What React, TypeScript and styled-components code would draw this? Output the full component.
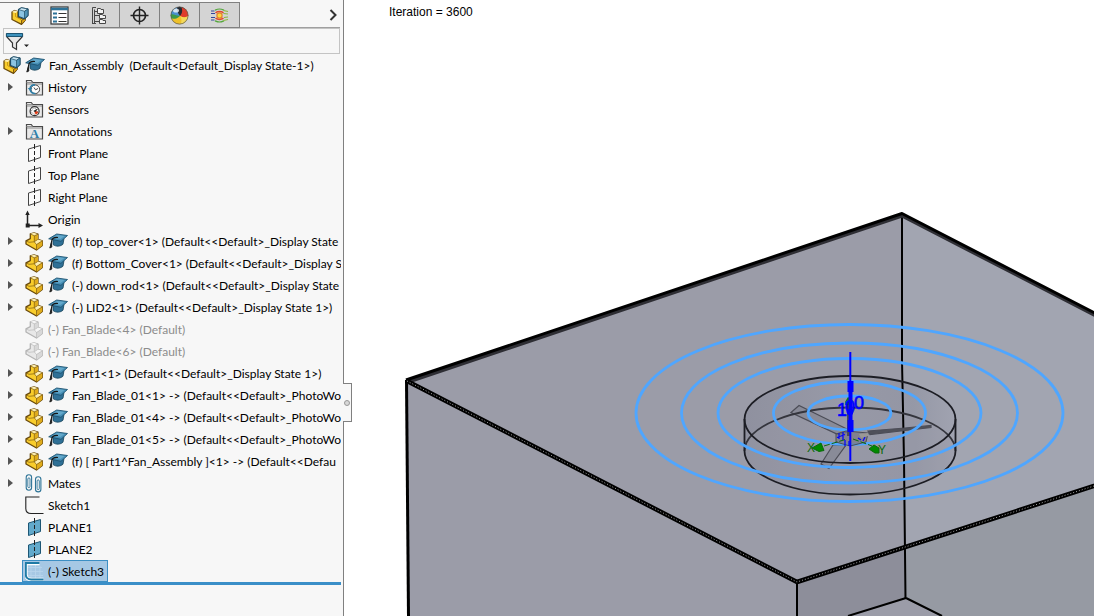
import React from 'react';
import styled, { createGlobalStyle } from 'styled-components';

const GlobalStyle = createGlobalStyle`
  *, *::before, *::after { box-sizing: border-box; }
  body { margin: 0; background: #fff; overflow: hidden; }
  button { font: inherit; color: inherit; background: none; border: 0; padding: 0; text-align: left; }
  svg { display: block; flex: none; }
`;

const Page = styled.div`
  display: flex;
  height: 100vh;
  font-family: Lato, 'Open Sans', sans-serif;
  font-size: 12px;
  font-variant-ligatures: none;
  color: #000;
`;

const Panel = styled.aside`
  position: relative;
  flex: none;
  width: 344px;
  padding-top: 2px;
  background: #f7f7f7;
  border-right: 1px solid #808080;
`;

const TabStrip = styled.div`
  display: flex;
  height: 26px;
  margin-right: 3px;
`;

const Tab = styled.button<{ $active?: boolean }>`
  display: flex;
  align-items: center;
  justify-content: center;
  width: 40px;
  border: solid #808080;
  border-width: ${p => (p.$active ? '1px 1px 0 0' : '1px 1px 1px 0')};
  background: ${p => (p.$active ? '#f7f7f7' : '#d4d4d4')};
`;

const MoreTabs = styled.button`
  display: flex;
  flex: 1;
  align-items: center;
  justify-content: flex-end;
  padding-right: 3px;
  border-bottom: 1px solid #a0a0a0;
`;

const FilterBar = styled.div`
  display: flex;
  align-items: center;
  height: 26px;
  margin: 0 3px;
  padding: 0 1px;
  border: 1px solid #c4c4c4;
`;

const FilterInput = styled.input`
  flex: 1;
  min-width: 0;
  border: 0;
  outline: 0;
  background: transparent;
  font: inherit;
`;

const Tree = styled.ul`
  margin: 0 2px 0 0;
  padding: 0;
  list-style: none;
  border-bottom: 3px solid #3a8fc8;
`;

const Row = styled.li`
  display: flex;
  height: 22px;
  overflow: hidden;
`;

const Expander = styled.button`
  display: flex;
  flex: none;
  align-items: center;
  width: 22px;
  padding-left: 8px;
`;

const Node = styled.button<{ $selected?: boolean; $muted?: boolean }>`
  display: flex;
  flex: none;
  align-items: center;
  gap: 4px;
  height: 22px;
  padding: 0 3px 0 2px;
  border: 1px solid ${p => (p.$selected ? '#3c8fc4' : 'transparent')};
  background: ${p => (p.$selected ? '#a6c8e4' : 'none')};
  color: ${p => (p.$muted ? '#8c8c8c' : '#000')};
  white-space: pre;
  line-height: 18px;
`;

const Label = styled.span`
  padding-top: 2px;
`;

const Handle = styled.button`
  position: absolute;
  top: 383px;
  right: -9px;
  display: flex;
  align-items: center;
  justify-content: center;
  width: 9px;
  height: 39px;
  border: solid #808080;
  border-width: 1px 1px 1px 0;
  background: #f7f7f7;
`;

const Knob = styled.span`
  width: 6px;
  height: 6px;
  border: 1px solid #999;
  border-radius: 50%;
  background: #d8d8d8;
`;

const Viewport = styled.main`
  flex: 1;
  min-width: 0;
  display: grid;
  overflow: hidden;
`;

const Drawing = styled.svg`
  grid-area: 1 / 1;
  width: 100%;
  height: 100%;
`;

const Status = styled.p`
  grid-area: 1 / 1;
  z-index: 1;
  margin: 0;
  padding: 4px 0 0 45px;
  font: 12px/16px 'Liberation Sans', Arial, sans-serif;
`;

const Part = ({ grey }: { grey?: boolean }) => {
  const line = grey ? '#b4b4b4' : '#6a4a0c';
  const top = grey ? '#f6f6f6' : '#fdeeb0';
  const mid = grey ? '#e8e8e8' : '#f9cd2c';
  const dark = grey ? '#d8d8d8' : '#e0ac1c';
  return (
    <svg width="19" height="19" viewBox="0 0 19 19" strokeLinejoin="round">
      <path d="M5.3 1.8 9 .8 13 2.200V7.300L17.300 8.800V13.500L11.500 18 1 12V8.800L5.300 6.700Z" fill={mid} stroke={line} strokeWidth="1.300" />
      <path d="M5.300 1.800 9 .8 13 2.200 9.300 3.800Z" fill={top} />
      <path d="M13 2.200V7.500L9.300 9.800V3.800Z" fill={dark} />
      <path d="M9.300 9.800 13 7.500 17.300 8.800 11.500 12.500Z" fill={top} />
      <path d="M11.500 12.500 17.300 8.800V13.500L11.500 18Z" fill={dark} />
      <path d="M5.300 1.800 9.300 3.800 13 2.200M9.300 3.800V9.800L11.500 12.500 17.300 8.800M11.500 12.500V17.600M9.300 9.800 12.600 7.600M1 8.800 4 10.300 9.300 9.800" fill="none" stroke={line} strokeWidth=".6" />
    </svg>
  );
};

const Assembly = () => (
  <svg width="18" height="18" viewBox="0 0 18 18" strokeLinejoin="round">
    <path d="M1 5 3.500 3.500 7 4.500V10L13 12.500V14.500L10.500 17.300 1 12.500Z" fill="#f9cd2c" stroke="#6a4a0c" strokeWidth="1.300" />
    <path d="M1 5 3.500 3.500 7 4.500 4.500 6Z" fill="#fdeeb0" />
    <path d="M4.500 6V9.500L10.500 13V17" fill="none" stroke="#b8860f" strokeWidth=".7" />
    <path d="M10.500 13.500 14.500 11V13.500L10.500 17.300Z" fill="#dca416" stroke="#6a4a0c" strokeWidth=".8" />
    <path d="M7.500 2.500 10.500 .8 17 2V8.500L13.500 11.800 7.500 9.500Z" fill="#8cc4e2" stroke="#1d4a63" strokeWidth="1.200" />
    <path d="M7.500 2.500 10.500 .8 17 2 13.500 4.300Z" fill="#cbe6f3" stroke="#1d4a63" strokeWidth=".7" />
    <path d="M13.500 4.300 17 2V8.500L13.500 11.800Z" fill="#4f93b7" stroke="#1d4a63" strokeWidth=".7" />
  </svg>
);

const Cap = () => (
  <svg width="20" height="18" viewBox="0 0 20 18">
    <path d="M5 7.500V12.500C8 15 12.500 14.500 15 12.200L16 6.500Z" fill="#2f7096" stroke="#174258" strokeWidth=".8" />
    <path d="M.7 6.800 8.700 2 19.500 3.500 13 9.300Z" fill="#4790b7" stroke="#1d5270" strokeWidth=".9" />
    <path d="M4 6 9 3 16.500 4 12.500 7Z" fill="#65a9cb" />
    <path d="M10 5.500C7 5.200 4.300 6 3.800 8.500L2.800 14.500" fill="none" stroke="#161616" strokeWidth="1.200" />
    <path d="M3.400 10.500 1.800 16 3.800 15Z" fill="#222" stroke="#222" />
  </svg>
);

const Folder = ({ children }: { children: React.ReactNode }) => (
  <svg width="19" height="19" viewBox="0 0 19 19">
    <path d="M1.5 17V2.5H6.3L7.800 4.500H17.500V17Z" fill="#e9e9e9" stroke="#4a4a4a" strokeWidth="1.200" />
    <path d="M1 4.600H8M2 6H17" stroke="#777" strokeWidth=".8" />
    {children}
  </svg>
);

const HistoryIcon = () => (
  <Folder>
    <circle cx="10.300" cy="11.300" r="4.300" fill="#fff" stroke="#444" />
    <path d="M9 9.500 10.500 11.800 13 10.500" fill="none" stroke="#444" />
    <path d="M5 10.500C5.300 8 7.300 6.500 10 7M5.200 12C6 14.500 8 15.800 10.500 15.500" fill="none" stroke="#2e7fa8" strokeWidth="1.600" />
    <path d="M2.800 10H7.400L5.100 13Z" fill="#2e7fa8" />
  </Folder>
);

const SensorIcon = () => (
  <Folder>
    <circle cx="9.600" cy="11.200" r="4.500" fill="#fff" stroke="#333" strokeWidth="1.200" />
    <circle cx="9.600" cy="11.200" r="3" fill="none" stroke="#555" strokeDasharray="1 1.300" />
    <path d="M12.600 8.500 10.600 12.500 8.300 11Z" fill="#222" />
    <path d="M9.400 12.500 11 14.800 13.500 12.500 11.500 11Z" fill="#e2401c" />
  </Folder>
);

const AnnotationIcon = () => (
  <Folder>
    <text x="9.500" y="15.500" textAnchor="middle" fontFamily="Liberation Serif, serif" fontWeight="700" fontSize="13" fill="#2e7fa8">A</text>
  </Folder>
);

const Plane = ({ solid }: { solid?: boolean }) => (
  <svg width="19" height="19" viewBox="0 0 19 19">
    <path d="M3.500 5 15.500 1.500V13.500L3.500 17.500Z" fill={solid ? '#62a9cb' : '#fbfbfb'} stroke={solid ? '#1d5674' : '#444'} />
    <path d="M9.500 0V19" stroke="#222" strokeDasharray="5 2 4 2" />
  </svg>
);

const OriginIcon = () => (
  <svg width="19" height="19" viewBox="0 0 19 19">
    <path d="M2.500 3V15.500H15" fill="none" stroke="#222" strokeWidth="1.500" />
    <path d="M.3 5 2.500 .6 4.700 5ZM13.500 13 18 15.500 13.500 18ZM.7 13.500H4.700V17.500H.7Z" fill="#222" />
  </svg>
);

const MatesIcon = () => (
  <svg width="19" height="19" viewBox="0 0 19 19" fill="none" stroke="#2f7598" strokeWidth="1.100">
    <path d="M1.200 6V3.500a2.700 2.700 0 0 1 5.400 0V13.500a2.700 2.700 0 0 1-5.400 0V5.500" />
    <path d="M2.800 12.500V5a1.100 1.100 0 0 1 2.200 0V12.500a1.100 1.100 0 0 1-2.200 0" strokeWidth=".9" />
    <path d="M10.500 8V5.500a2.700 2.700 0 0 1 5.400 0V15.200a2.700 2.700 0 0 1-5.400 0V7.500" />
    <path d="M12.100 14.500V7a1.100 1.100 0 0 1 2.200 0V14.500a1.100 1.100 0 0 1-2.200 0" strokeWidth=".9" />
  </svg>
);

const SketchIcon = ({ active }: { active?: boolean }) => (
  <svg width="19" height="19" viewBox="0 0 19 19" fill="none">
    {active && <path d="M1 5.500H17M1 9.500H18M1 13.500H18M6 2V18M10.500 2V18M15 4V18" stroke="#b9d5ec" strokeWidth=".8" />}
    {active && <path d="M14.500 1.500H1V12.200C1 15.500 3 17.500 6.200 17.500H18.500" stroke="#fff" strokeWidth="3.400" />}
    <path d="M14.500 1H.8V12.500C.8 15.500 3 17.500 6.200 17.500H18.500" stroke={active ? '#1f7ba6' : '#222'} strokeWidth={active ? 2 : 1.100} />
  </svg>
);

const PropertyIcon = () => (
  <svg width="19" height="19" viewBox="0 0 19 19">
    <rect x="1" y="1" width="17" height="17" fill="#fff" stroke="#333" strokeWidth="1.200" />
    <path d="M1 3H18" stroke="#2d7298" strokeWidth="2.600" />
    <path d="M3 7.500H7M3 11.500H7M3 15.500H7" stroke="#2d7298" strokeWidth="2" />
    <path d="M8.500 7.500H16.500M8.500 11.500H16.500M8.500 15.500H16.500" stroke="#333" />
  </svg>
);

const ConfigIcon = () => (
  <svg width="17" height="19" viewBox="0 0 17 19" fill="none" stroke="#484848">
    <path d="M1.500 17.500V1.500H5M3.500 3.500V17.500M1 17.500H5M3.500 9.500H8.500M3.500 15.500H8.500M4 5.500H7" />
    <path d="M6.500 2.500V7.500H12.500V3.500H10L9.500 2.500Z" fill="#f2f2f2" />
    <path d="M8.500 8.500V12.500H14.500V9.500H12L11.500 8.500ZM8.500 13.500V17.500H14.500V14.500H12L11.500 13.500Z" fill="#f2f2f2" />
  </svg>
);

const TargetIcon = () => (
  <svg width="19" height="19" viewBox="0 0 19 19" fill="none" stroke="#222" strokeWidth="1.700">
    <circle cx="9.500" cy="9.500" r="6" />
    <path d="M9.500 .5V18.500M.5 9.500H18.500" strokeWidth="1.400" />
  </svg>
);

const AppearanceIcon = () => (
  <svg width="19" height="19" viewBox="0 0 19 19">
    <defs>
      <clipPath id="ball"><circle cx="9.500" cy="9.500" r="8.700" /></clipPath>
    </defs>
    <g clipPath="url(#ball)">
      <path d="M0 0H19V19H0Z" fill="#efc12b" />
      <path d="M0 6 5 4 10 10C7 13 3 13.500 0 12Z" fill="#3d9a48" />
      <path d="M0 0H10C8 4 8 7 10 10 6 9.500 3 8 0 8Z" fill="#4a8fce" />
      <path d="M7 0H14L17 9 10 10C7.500 7 7 3.500 7 0Z" fill="#262b33" />
      <path d="M11 0H19V10C16 12 13 11.500 10 10 13 7 12.500 3 11 0Z" fill="#df3c2c" />
      <path d="M10 10C13 12 16 12 19 9V19H10C12 16 12 12.500 10 10Z" fill="#f4d95a" />
      <ellipse cx="6" cy="4.500" rx="3" ry="2" fill="#fff" opacity=".75" />
    </g>
    <circle cx="9.500" cy="9.500" r="8.600" fill="none" stroke="#555" strokeWidth=".7" />
  </svg>
);

const FlowIcon = () => (
  <svg width="19" height="15" viewBox="0 0 19 15" fill="none" strokeWidth="1.200">
    <path d="M5 2.200C6.500 1.500 7.500 1 9.500 1S12.500 1.500 14 2.200M5 12.800C6.500 13.500 7.500 14 9.500 14s3-.5 4.500-1.200" stroke="#54a63c" />
    <path d="M5.500 4.800C6.500 4 7.500 3.500 9.500 3.500S12.500 4 13.500 4.800M5.500 10.200C6.500 11 7.500 11.500 9.500 11.500s3-.5 4-1.300" stroke="#e2482e" strokeWidth="1.500" />
    <path d="M13.500 2.500 18 3.500M13.500 5.500 18 6M14 9.500 18 9M13.500 12.500 18 11.500" stroke="#8cba3c" />
    <path d="M1 3H4.500M1 5.500H5M1 9.500H5M1 12H4.500" stroke="#33469a" />
    <circle cx="9.500" cy="7.500" r="2.600" fill="#ffd83a" stroke="#e2852e" />
  </svg>
);

const FunnelIcon = () => (
  <svg width="24" height="19" viewBox="0 0 24 19">
    <path d="M1.500 2H17.500V4.500L11.500 11V17.500L7.500 15V11L1.500 4.500Z" fill="#e8e8e8" stroke="#333" strokeWidth="1.200" />
    <path d="M1.500 1.500H17.500V4.500H1.500Z" fill="#3d92bd" stroke="#1d5674" />
    <path d="M19 12.500H24L21.500 15Z" fill="#222" />
  </svg>
);

type Item = {
  label: string;
  icon: React.ReactNode;
  cap?: boolean;
  open?: boolean;
  muted?: boolean;
  selected?: boolean;
};

const part = (label: string): Item => ({ label, icon: <Part />, cap: true, open: true });
const hidden = (label: string): Item => ({ label, icon: <Part grey />, muted: true });

const items: Item[] = [
  { label: 'History', icon: <HistoryIcon />, open: true },
  { label: 'Sensors', icon: <SensorIcon /> },
  { label: 'Annotations', icon: <AnnotationIcon />, open: true },
  { label: 'Front Plane', icon: <Plane /> },
  { label: 'Top Plane', icon: <Plane /> },
  { label: 'Right Plane', icon: <Plane /> },
  { label: 'Origin', icon: <OriginIcon /> },
  part('(f) top_cover<1> (Default<<Default>_Display State'),
  part('(f) Bottom_Cover<1> (Default<<Default>_Display S'),
  part('(-) down_rod<1> (Default<<Default>_Display State'),
  part('(-) LID2<1> (Default<<Default>_Display State 1>)'),
  hidden('(-) Fan_Blade<4> (Default)'),
  hidden('(-) Fan_Blade<6> (Default)'),
  part('Part1<1> (Default<<Default>_Display State 1>)'),
  part('Fan_Blade_01<1> -> (Default<<Default>_PhotoWo'),
  part('Fan_Blade_01<4> -> (Default<<Default>_PhotoWo'),
  part('Fan_Blade_01<5> -> (Default<<Default>_PhotoWo'),
  part('(f) [ Part1^Fan_Assembly ]<1> -> (Default<<Defau'),
  { label: 'Mates', icon: <MatesIcon />, open: true },
  { label: 'Sketch1', icon: <SketchIcon /> },
  { label: 'PLANE1', icon: <Plane solid /> },
  { label: 'PLANE2', icon: <Plane solid /> },
  { label: '(-) Sketch3', icon: <SketchIcon active />, selected: true },
];

const tabs = [
  { name: 'Feature tree', icon: <Assembly /> },
  { name: 'Properties', icon: <PropertyIcon /> },
  { name: 'Configurations', icon: <ConfigIcon /> },
  { name: 'Dimensions', icon: <TargetIcon /> },
  { name: 'Appearances', icon: <AppearanceIcon /> },
  { name: 'Flow analysis', icon: <FlowIcon /> },
];

const rings = [
  [213.5, 88.5],
  [168, 70],
  [131.5, 54.5],
  [76, 31.5],
  [41.5, 17],
];

const frontEdge = 'M407 381 797 582 1400 387';

const Scene = () => (
  <Drawing viewBox="344 0 750 616" preserveAspectRatio="xMinYMin slice" role="img" aria-label="Fan assembly model">
    <defs>
      <linearGradient id="wall" x1="0" x2="1">
        <stop offset="0" stopColor="#8b8d9c" />
        <stop offset=".45" stopColor="#9698a6" />
        <stop offset=".8" stopColor="#9194a3" />
        <stop offset="1" stopColor="#a0a2b0" />
      </linearGradient>
    </defs>
    <path d="M407 381 902 214 905 598 797 640H409Z" fill="#9b9ca8" />
    <path d="M902 214 1400 470V640H905Z" fill="#a2a5b1" />
    <path d="M797 582 905 547V598L797 632Z" fill="#8d8e9a" />
    <path d="M905 547 1400 387V640H985L905 598Z" fill="#969aa3" />
    <path d="M797 632 905 598 985 640H797Z" fill="#9b9ca8" />

    <path d="M744.5 419a105.500 43.500 0 0 1 211 0V451a105.500 43.500 0 0 1-211 0Z" fill="url(#wall)" opacity=".75" />
    <ellipse cx="850" cy="451" rx="105.500" ry="43.500" fill="#9799a6" opacity=".3" />

    <g fill="none" stroke="#000">
      <path d="M902 214V360L904 460 905.500 598" strokeWidth="2" />
      <path d="M906 598 848 616M906 598 942 616" strokeWidth="2" />
      <path d="M797 582V616" strokeWidth="2" />
      <path d="M406.500 380 408.500 616" strokeWidth="3" />
      <path d="M407 382 902 215.500 1400 472.500" stroke="#2e2e34" strokeWidth="4" />
      <path d="M406 380 902 213.500 1400 470.500" strokeWidth="3" strokeLinejoin="round" />
      <path d={frontEdge} strokeWidth="4.500" strokeLinejoin="round" />
      <path d={frontEdge} stroke="#b8b8b8" strokeWidth=".9" strokeDasharray="1 2" />
    </g>

    <g fill="#7c7d89" stroke="#4c4d57" strokeWidth="1.200">
      <path d="M791 412.500 799 405.500 851 431 838 434.500Z" fillOpacity=".5" />
      <path d="M833 445 846 445 829 468.500 821 464Z" fillOpacity=".5" />
      <path d="M868 431 905 428 931 425.500V427.500L905 430.500 870 434.500Z" fill="#50515a" />
    </g>

    <g fill="none" stroke="#1c1d24" strokeWidth="1.800">
      <path d="M744.500 451a105.500 43.500 0 0 1 211 0" stroke="#34353d" />
      <path d="M744.500 419V451a105.500 43.500 0 0 0 211 0V419" />
      <ellipse cx="850" cy="419.500" rx="105.500" ry="43.500" />
    </g>

    <g fill="none" stroke="#4fa6ff" strokeWidth="2.800">
      {rings.map(([rx, ry]) => (
        <ellipse key={rx} cx="849.500" cy="413" rx={rx} ry={ry} />
      ))}
    </g>

    <path d="M836 434 846 431 868 433 866 442 850 446 836 442Z" fill="#777884" fillOpacity=".7" stroke="#4c4d57" />
    <path d="M847 402H850V436H847Z" fill="#4b4c55" />
    <path d="M845 402 848 397 852 400V405H845Z" fill="#0b7a0b" />
    <g fill="#008a00" stroke="#0b6a0b">
      <path d="M812 448 821 443 824 450.500 819 451.500Z" />
      <path d="M824 446 847 439M853 439 872 446" fill="none" strokeDasharray="6 2" />
      <path d="M869 449 874 445 879 448 879 453 875 453Z" />
    </g>
    <g fontFamily="Liberation Sans, Arial, sans-serif" fontSize="12">
      <text x="807" y="452" fill="#0b6a0b">X</text>
      <text x="878" y="454" fill="#0b6a0b">Y</text>
    </g>
    <g fontFamily="Liberation Sans, Arial, sans-serif" fontSize="18" fill="#00f" stroke="#00f" strokeWidth=".6">
      <text x="837" y="416">1</text>
      <text x="845" y="413">0</text>
      <text x="854" y="409">0</text>
    </g>
    <g stroke="#00f">
      <path d="M850.300 352V461" strokeWidth="2" />
      <path d="M850.500 381V392M850.500 420V432" strokeWidth="6" />
      <path d="M850.500 388V432" strokeWidth="4" />
      <circle cx="850" cy="412" r="3" fill="#00f" />
      <path d="M839 433V439M843 432V440M837 437.500 845 434.500M845 440V446M849 441V446M858 438 861 440M863 441 865 437" fill="none" strokeWidth="1.200" />
    </g>
    <path d="M859 434 868 433 868 436 861 438Z" fill="#9a9896" />
  </Drawing>
);

export default function App() {
  return (
    <Page>
      <GlobalStyle />
      <Panel>
        <TabStrip role="tablist">
          {tabs.map((tab, i) => (
            <Tab key={tab.name} type="button" role="tab" aria-selected={i === 0} aria-label={tab.name} $active={i === 0}>
              {tab.icon}
            </Tab>
          ))}
          <MoreTabs type="button" aria-label="More tabs">
            <svg width="8" height="12" viewBox="0 0 8 12">
              <path d="M1.500 1 6.500 6 1.500 11" fill="none" stroke="#333" strokeWidth="2" />
            </svg>
          </MoreTabs>
        </TabStrip>
        <FilterBar>
          <button type="button" aria-label="Filter options"><FunnelIcon /></button>
          <FilterInput aria-label="Filter tree" />
        </FilterBar>
        <Tree>
          <Row>
            <Node type="button">
              <Assembly />
              <Cap />
              <Label>{'Fan_Assembly  (Default<Default_Display State-1>)'}</Label>
            </Node>
          </Row>
          {items.map(item => (
            <Row key={item.label}>
              <Expander type="button" aria-label={'Expand ' + item.label} disabled={!item.open}>
                {item.open && (
                  <svg width="5" height="8" viewBox="0 0 5 8">
                    <path d="M0 0 5 4 0 8Z" fill="#555" />
                  </svg>
                )}
              </Expander>
              <Node type="button" $selected={item.selected} $muted={item.muted}>
                {item.icon}
                {item.cap && <Cap />}
                <Label>{item.label}</Label>
              </Node>
            </Row>
          ))}
        </Tree>
        <Handle type="button" aria-label="Resize panel"><Knob /></Handle>
      </Panel>
      <Viewport>
        <Status>Iteration = 3600</Status>
        <Scene />
      </Viewport>
    </Page>
  );
}
